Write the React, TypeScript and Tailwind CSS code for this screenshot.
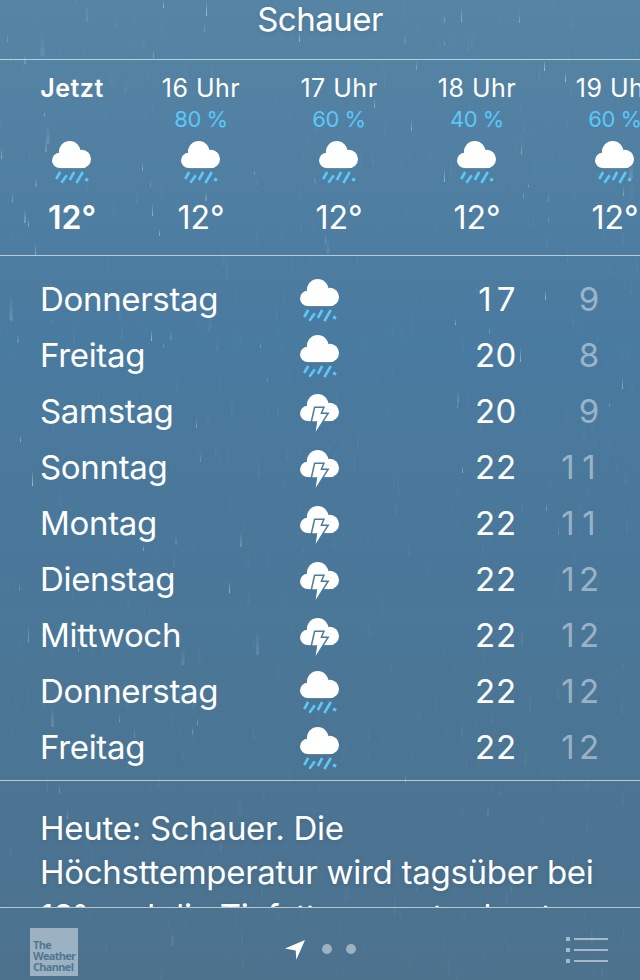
import React from "react";

type Kind = "rain" | "storm";

const hours = [
  { time: "Jetzt", chance: "", now: true },
  { time: "16 Uhr", chance: "80 %" },
  { time: "17 Uhr", chance: "60 %" },
  { time: "18 Uhr", chance: "40 %" },
  { time: "19 Uhr", chance: "60 %" },
];

const days: { name: string; kind: Kind; high: number; low: number }[] = [
  { name: "Donnerstag", kind: "rain", high: 17, low: 9 },
  { name: "Freitag", kind: "rain", high: 20, low: 8 },
  { name: "Samstag", kind: "storm", high: 20, low: 9 },
  { name: "Sonntag", kind: "storm", high: 22, low: 11 },
  { name: "Montag", kind: "storm", high: 22, low: 11 },
  { name: "Dienstag", kind: "storm", high: 22, low: 12 },
  { name: "Mittwoch", kind: "storm", high: 22, low: 12 },
  { name: "Donnerstag", kind: "rain", high: 22, low: 12 },
  { name: "Freitag", kind: "rain", high: 22, low: 12 },
];

// Bright drops in the foreground: x, bottom y, length, width, opacity
const drops: number[][] = [
  [163.5, 8, 8, 1, 0.5], [206.5, 16, 16, 1, 0.6], [87, 22, 20, 2.5, 0.13], [42.5, 57, 26, 4, 0.13],
  [25, 64, 10, 1.5, 0.35], [153.5, 58, 8, 1, 0.4], [299.5, 42, 12, 1, 0.5], [204.5, 32, 8, 1, 0.3],
  [461.5, 22, 14, 1, 0.45], [444.5, 22, 6, 1, 0.4], [519.5, 23, 9, 1, 0.4], [405, 43, 8, 1.5, 0.25],
  [444.5, 45, 5, 1, 0.35], [416.5, 70, 10, 1, 0.35], [544.5, 71, 11, 1, 0.65], [565.5, 82, 11, 1, 0.6],
  [374.5, 108, 10, 1, 0.45], [411.5, 131, 12, 1, 0.45], [44.5, 116, 5, 1, 0.45], [7.5, 42, 7, 1, 0.3],
  [48, 144, 20, 3, 0.2], [46, 152, 12, 1.5, 0.35], [1.5, 159, 12, 1, 0.45], [36, 187, 10, 1.5, 0.35],
  [12.5, 202, 9, 1, 0.4], [25, 223, 14, 2, 0.35], [28.5, 227, 9, 1, 0.45], [142.5, 171, 9, 1, 0.4],
  [150.5, 187, 8, 1, 0.3], [152.5, 216, 13, 1, 0.5], [159.5, 236, 8, 1, 0.5], [206, 201, 10, 1.5, 0.35],
  [35.5, 255, 12, 1, 0.4], [254.5, 175, 5, 1, 0.35], [315, 183, 7, 1, 0.35], [444.5, 182, 14, 1, 0.55],
  [521.5, 154, 9, 1, 0.45], [523.5, 198, 6, 1, 0.4], [548.5, 202, 9, 1, 0.3], [528.5, 187, 4, 1, 0.4],
  [631, 179, 16, 4, 0.2], [623.5, 196, 11, 1, 0.4], [548.5, 222, 8, 1, 0.25], [349.5, 205, 8, 1, 0.3],
  [328, 254, 18, 3, 0.13], [325.5, 243, 10, 1, 0.3], [11, 321, 26, 3.5, 0.2], [18, 343, 8, 2, 0.25],
  [151.5, 341, 11, 1, 0.6], [171, 340, 10, 1, 0.4], [163.5, 347, 4, 1, 0.4], [260.5, 348, 6, 1, 0.35],
  [267.5, 381, 4, 1, 0.4], [196.5, 428, 10, 1, 0.4], [20.5, 442, 7, 1, 0.5], [32.5, 486, 16, 1, 0.6],
  [200.5, 462, 10, 1, 0.3], [241, 547, 15, 1.5, 0.35], [143.5, 551, 7, 1, 0.45], [176, 545, 10, 1.5, 0.2],
  [545.5, 300, 10, 1, 0.6], [520.5, 362, 15, 1, 0.5], [622.5, 389, 12, 1, 0.5], [458, 403, 13, 1.5, 0.3],
  [457.5, 408, 6, 1, 0.3], [455.5, 325, 6, 1, 0.5], [489.5, 333, 6, 1, 0.4], [462.5, 473, 8, 1, 0.5],
  [546.5, 511, 8, 1, 0.35], [558.5, 535, 9, 1, 0.25], [609.5, 407, 6, 1, 0.3], [229.5, 593, 12, 1, 0.55],
  [257.5, 655, 24, 3, 0.16], [183, 665, 18, 3, 0.16], [28.5, 642, 18, 1, 0.35], [78.5, 652, 7, 1, 0.35],
  [19.5, 591, 8, 1, 0.3], [52.5, 727, 22, 3, 0.18], [119.5, 722, 9, 1, 0.3], [197.5, 725, 8, 1, 0.4],
  [192.5, 734, 8, 1, 0.35], [134.5, 738, 10, 1, 0.25], [59.5, 793, 8, 1, 0.3], [67.5, 819, 10, 1, 0.3],
  [488, 816, 12, 2, 0.13], [405.5, 782, 10, 1, 0.25], [172.5, 946, 18, 2.5, 0.12],
];

// Faint background drizzle, evenly scattered by a fixed sequence
const drizzle = Array.from({ length: 520 }, (_, i) => {
  const r = (n: number) => {
    const v = Math.sin((i + 1) * n) * 43758.5453;
    return v - Math.floor(v);
  };
  return [r(12.9898) * 640, r(78.233) * 980, 6 + r(37.719) * 16, 1 + r(93.989) * 1.6, 0.02 + r(51.17) * 0.05];
});

function Rain() {
  return (
    <svg className="pointer-events-none absolute inset-0 h-full w-full" viewBox="0 0 640 980" aria-hidden="true">
      <defs>
        <linearGradient id="streak" x1="0" y1="0" x2="0" y2="1">
          <stop offset="0" stopColor="#d8edf5" stopOpacity="0" />
          <stop offset="1" stopColor="#d8edf5" />
        </linearGradient>
      </defs>
      {[...drizzle, ...drops].map(([x, y, h, w, o], i) => (
        <rect key={i} x={x - w / 2} y={y - h} width={w} height={h} rx={w / 2} fill="url(#streak)" opacity={o} />
      ))}
    </svg>
  );
}

function Cloud({ y }: { y: number }) {
  return (
    <g fill="#fff" transform={`translate(0 ${y})`}>
      <circle cx="7.7" cy="19.4" r="7.7" />
      <circle cx="17.7" cy="10.8" r="10.8" />
      <circle cx="29.8" cy="17.9" r="9.2" />
      <rect x="7.7" y="13.5" width="22.1" height="13.6" />
    </g>
  );
}

function WeatherIcon({ kind }: { kind: Kind }) {
  return (
    <svg className="block h-[44px] w-[40px]" viewBox="0 0 40 44" aria-hidden="true">
      {kind === "rain" ? (
        <>
          <Cloud y={0} />
          <g stroke="#5ac8fa" strokeWidth="2.6" fill="none">
            <path d="M8.2 31L4.2 38M14.8 34.2L9.4 41.8M22.2 31L17.8 39M30.8 31L24.4 42" />
            <path d="M35.4 37.2L33.8 40" strokeWidth="3.2" />
          </g>
        </>
      ) : (
        <>
          <Cloud y={3} />
          <path
            d="M15.2 17H22.8L20.3 23H26.8L15.7 40.7L17.3 30.2H12.2Z"
            fill="#fff"
            stroke="#4a7a9d"
            strokeWidth="3"
            paintOrder="stroke"
          />
        </>
      )}
    </svg>
  );
}

function Digits({ value }: { value: number }) {
  return (
    <>
      {String(value)
        .split("")
        .map((c, i) => (
          <span key={i} className="inline-block w-[21px] text-center">
            {c}
          </span>
        ))}
    </>
  );
}

export default function App() {
  return (
    <main className="relative flex h-[980px] w-[640px] flex-col overflow-hidden bg-linear-to-b from-[#5684a4] via-[#497a9f] via-35% to-[#4c728e] font-['Inter','Liberation_Sans',sans-serif] text-white">
      <Rain />
      <header className="relative flex h-[60px] shrink-0 justify-center border-b border-white/60 pt-px">
        <h1 className="h-9 text-[33px] leading-9 tracking-[-0.5px] [text-shadow:0_1px_4px_rgba(30,60,90,0.2)]">Schauer</h1>
      </header>

      <section className="relative flex h-[196px] shrink-0 overflow-hidden border-b border-white/60">
        {hours.map((h) => (
          <div
            key={h.time}
            className={h.now ? "flex w-[132px] shrink-0 flex-col items-center pl-3 font-semibold" : "flex w-[138px] shrink-0 flex-col items-center"}
          >
            <div className="mt-3 h-8 text-[25px] leading-8 tracking-[0.5px]">{h.time}</div>
            <div className="mt-0.5 h-[26px] text-[22px] leading-[26px] tracking-[-0.5px] text-[#5ac8fa]">{h.chance}</div>
            <div className="mt-[9px]">
              <WeatherIcon kind="rain" />
            </div>
            <div className="mt-[13px] h-10 text-[32px] leading-10">12°</div>
          </div>
        ))}
      </section>

      <section className="relative flex h-[525px] shrink-0 flex-col border-b border-white/60 pt-[15px]">
        {days.map((d, i) => (
          <div key={i} className="flex h-14 shrink-0 items-center pl-10 text-[33px] leading-[56px]">
            <div className="w-[259.5px] tracking-[-0.32px]">{d.name}</div>
            <div className="w-10 pt-1">
              <WeatherIcon kind={d.kind} />
            </div>
            <div className="w-[177px] text-right">
              <Digits value={d.high} />
            </div>
            <div className="w-[83px] text-right text-white/45">
              <Digits value={d.low} />
            </div>
          </div>
        ))}
      </section>

      <section className="relative h-[126px] shrink-0 overflow-hidden pt-[25px] pl-10 text-[33px] leading-[44px] tracking-[-0.27px] [text-shadow:0_1px_4px_rgba(30,60,90,0.2)]">
        <p className="whitespace-nowrap">
          Heute: Schauer. Die
          <br />
          Höchsttemperatur wird tagsüber bei
          <br />
          18° und die Tiefsttemperatur heute
        </p>
      </section>

      <footer className="relative flex h-[73px] shrink-0 items-start border-t border-white/60">
        <div className="mt-5 ml-[30px] flex h-12 w-12 flex-col bg-white/45 pt-[11px] pl-[3px] font-['Open_Sans','Liberation_Sans',sans-serif] text-[11px] leading-[11px] font-bold tracking-[-0.7px] text-[#4f7893]">
          <span>The</span>
          <span>Weather</span>
          <span>Channel</span>
        </div>
        <div className="mt-8 ml-[207px] flex items-center">
          <svg className="h-[18px] w-5 overflow-visible" viewBox="0 0 20 18" aria-hidden="true">
            <path d="M20 0L11.3 19.8L10.7 10.4L0 8.6Z" fill="#fff" />
          </svg>
          <span className="ml-[17px] h-2.5 w-2.5 rounded-full bg-white/45" />
          <span className="ml-3.5 h-2.5 w-2.5 rounded-full bg-white/45" />
        </div>
        <div className="mt-[29px] ml-[210px] flex flex-col gap-[7px]">
          {[0, 1, 2].map((n) => (
            <div key={n} className="flex h-1 items-center">
              <span className="h-1 w-1 bg-white/50" />
              <span className="ml-1 h-0.5 w-[34px] bg-white/50" />
            </div>
          ))}
        </div>
      </footer>
    </main>
  );
}
